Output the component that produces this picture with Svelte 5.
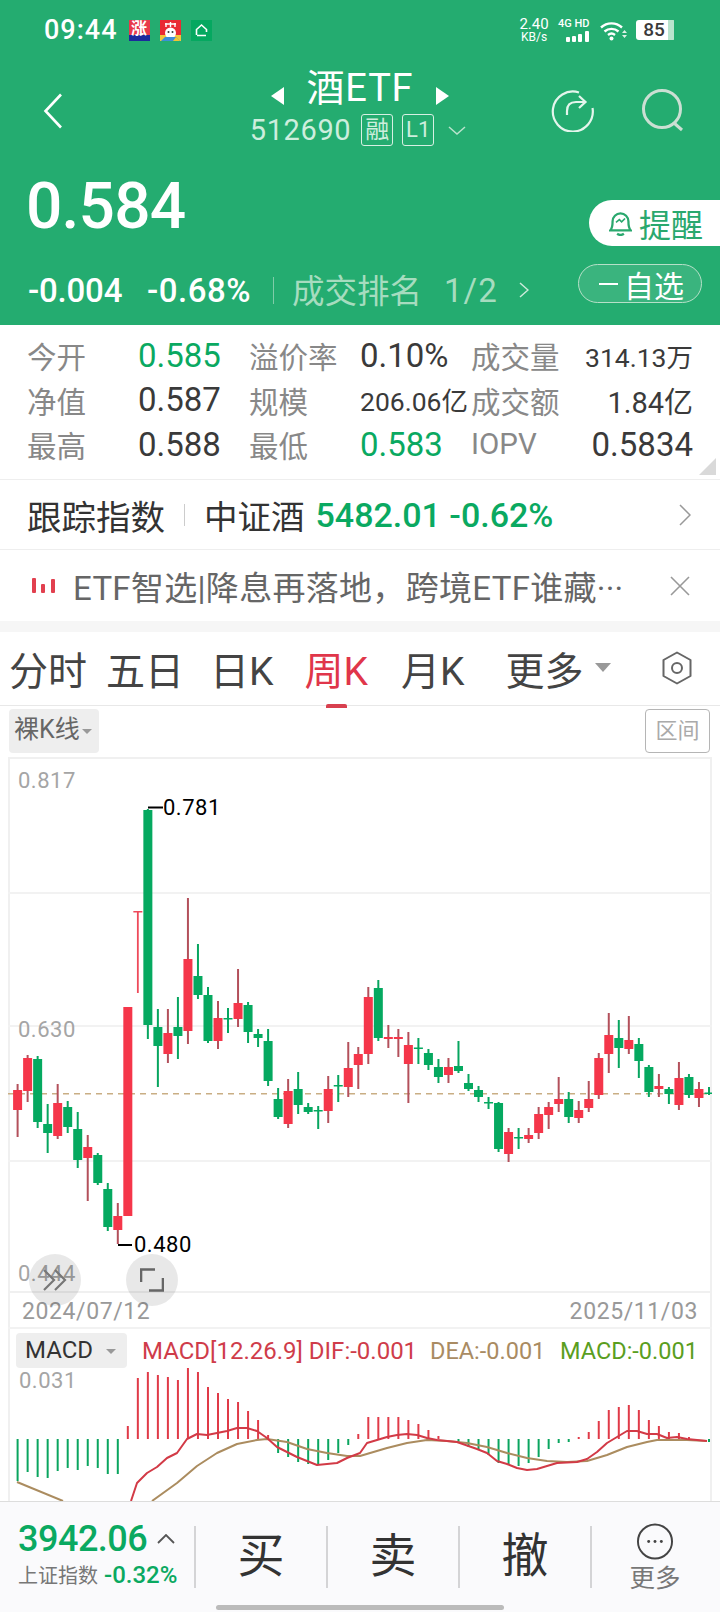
<script lang="ts">
  // one row per weekly candle: [colour, high, bodyTop, bodyBottom, low], y in page px
  const candles: [string, number, number, number, number][] = [
    ['r',1084,1090,1110,1137],['r',1055,1058,1091,1102],['g',1056,1059,1122,1128],['g',1104,1124,1133,1153],
    ['r',1084,1103,1136,1139],['g',1101,1107,1127,1133],['g',1112,1129,1160,1168],['r',1135,1147,1158,1201],
    ['g',1153,1155,1183,1185],['g',1183,1189,1227,1231],['r',1203,1216,1230,1244],['r',1007,1007,1216,1216],
    ['t',912,911,912.5,993],['g',809,810,1025,1039],['g',1009,1027,1046,1087],['r',1009,1033,1054,1063],
    ['g',997,1027,1036,1059],['r',898,959,1031,1044],['g',944,976,995,999],['g',987,995,1041,1043],
    ['r',1001,1018,1041,1049],['g',1008,1018,1019.5,1033],['r',969,1003,1019,1027],['g',1002,1005,1032,1043],
    ['g',1029,1034,1038,1047],['g',1029,1041,1081,1086],['g',1088,1099,1117,1119],['r',1079,1091,1124,1128],
    ['g',1072,1089,1105,1114],['g',1103,1107,1112,1114],['g',1106,1110,1111.5,1129],['r',1076,1089,1111,1123],
    ['g',1075,1085,1086.5,1102],['r',1042,1068,1087,1097],['r',1047,1054,1065,1089],['r',987,997,1054,1064],
    ['g',980,988,1038,1041],['r',1025,1037,1039,1048],['r',1029,1037,1039,1057],['r',1032,1045,1064,1103],
    ['g',1038,1047.5,1049,1064],['g',1049,1053,1065,1070],['g',1059,1067,1077,1083],['r',1058,1067,1075,1083],
    ['g',1041,1066,1071,1073],['g',1074,1083,1089,1091],['g',1086,1090,1097,1102],['g',1097,1102,1103.5,1109],
    ['g',1102,1103,1149,1152],['r',1128,1132,1154,1162],['g',1128,1137,1138.5,1149],['r',1128,1135,1139,1143],
    ['r',1107,1114,1133,1139],['r',1102,1107,1115,1129],['r',1077,1099,1104,1112],['g',1092,1099,1117,1123],
    ['r',1101,1110,1118,1123],['r',1081,1099,1108,1112],['r',1053,1058,1095,1099],['r',1013,1035,1054,1073],
    ['g',1020,1038,1048,1068],['r',1016,1040,1049,1054],['g',1038,1044,1061,1078],['g',1065,1067,1092,1097],
    ['r',1074,1086,1089,1097],['g',1087,1089,1094,1104],['r',1062,1078,1105,1110],['g',1074,1077,1095,1098],
    ['r',1082,1089,1098,1107],['g',1087,1092.5,1094,1095]
  ];

  // macd histogram end points, the other end is the zero line
  const bars = [
    1481,1472,1477,1478,1471,1468,1470,1466,1468,1474,1474,
    1426,1378,1372,1375,1377,1380,1368,1372,1387,1393,1399,1402,1411,1420,1435,
    1453,1457,1462,1464,1464,1460,1453,1445,
    1434,1417,1417,1417,1417,1420,1424,1430,1436,1439,
    1442,1447,1449,1455,1463,1464,1466,1463,1457,1449,1443,1442,
    1437,1432,1421,1410,1407,1405,1410,1420,1426,1432,1433,1437,1439,1442
  ];
  const zero = 1439;

  const dif = '131,1501 137,1483 147,1473 157,1467 167,1458 177,1453 187,1439 197,1434 207,1435 217,1433 227,1431 237,1428 247,1428 257,1431 267,1438 277,1447 287,1452 297,1457 307,1461 317,1465 327,1464 337,1463 347,1458 360,1453 367,1443 377,1440 387,1437 397,1435 407,1434 417,1435 427,1438 437,1440 457,1442 477,1449 487,1453 497,1461 507,1464 517,1468 527,1470 537,1469 547,1466 557,1463 577,1462 587,1459 597,1452 607,1443 617,1437 627,1431 637,1431 647,1434 657,1434 667,1438 677,1437 687,1439 707,1441';
  const deaLeft = '17,1482 63,1501';
  const dea = '152,1501 177,1483 197,1466 217,1453 237,1444 257,1440 267,1439 287,1442 307,1449 327,1453 347,1456 360,1456 387,1448 407,1443 427,1440 447,1441 467,1443 487,1447 507,1453 527,1458 547,1461 567,1462 587,1461 607,1455 627,1447 647,1442 657,1440 687,1440 707,1441';

  const xAt = (i: number) => 17.6 + i * 10.02;
  const stats = [
    { label: '今开', value: '0.585', up: true },
    { label: '溢价率', value: '0.10%' },
    { label: '成交量', value: '314.13万', small: true },
    { label: '净值', value: '0.587' },
    { label: '规模', value: '206.06亿', small: true },
    { label: '成交额', value: '1.84亿', mid: true },
    { label: '最高', value: '0.588' },
    { label: '最低', value: '0.583', up: true },
    { label: 'IOPV', value: '0.5834' }
  ];
  const tabs = ['分时', '五日', '日K', '周K', '月K'];
</script>

<div class="page">
  <header class="top">
    <div class="status">
      <span class="clock">09:44</span>
      <span class="app app-rise"><i>涨</i></span>
      <span class="app app-gift"><svg viewBox="0 0 21 21" width="21" height="21"><circle cx="10.5" cy="13" r="5.5" fill="#fff"/><circle cx="8.5" cy="12" r="1" fill="#333"/><circle cx="12.5" cy="12" r="1" fill="#333"/><path d="M6 7V3M10.5 7V2M15 7V3M5 4h11" stroke="#fff" stroke-width="1.4" fill="none"/><path d="M1 21l4-4h11l4 4z" fill="#3d8fd8"/><path d="M13 21l3-4 4 4z" fill="#f4c52f"/></svg></span>
      <span class="app app-home"><svg viewBox="0 0 21 21" width="21" height="21"><path d="M5.5 15V9.5l5-4.500 5 4.500V12M6 15.500h9" fill="none" stroke="#fff" stroke-width="1.600"/></svg></span>
      <span class="status-right">
        <span class="speed"><b>2.40</b><b class="unit">KB/s</b></span>
        <span class="signal">
          <b>4G HD</b>
          <svg viewBox="0 0 32 11" width="32" height="11"><g fill="#fff"><rect x="8" y="6" width="4" height="5" rx="1"/><rect x="14" y="5" width="4" height="6" rx="1"/><rect x="20" y="3" width="4" height="8" rx="1"/><rect x="27" y="0" width="4" height="11" rx="1"/></g></svg>
        </span>
        <svg class="wifi" viewBox="0 0 27 21" width="27" height="21"><g fill="none" stroke="#fff" stroke-width="2.400"><path d="M1 7.500C7 2 16 2 22 7.500"/><path d="M4.500 11.500c4-3.500 10-3.500 14 0"/><path d="M8 15c2-1.600 5-1.600 7 0"/></g><circle cx="11.500" cy="18.500" r="2" fill="#fff"/><path d="M22 13h5l-2.500-3zM22 15h5l-2.500 3z" fill="#dff2e8"/></svg>
        <span class="battery">85</span>
      </span>
    </div>

    <div class="nav">
      <svg class="back" viewBox="0 0 20 36" width="20" height="36"><path d="M18 1.500 2.500 18 18 34.500" fill="none" stroke="#fff" stroke-width="2.600"/></svg>
      <div class="title-box">
        <div class="title-line">
          <span class="tri tri-left"></span>
          <span class="title">酒ETF</span>
          <span class="tri tri-right"></span>
        </div>
        <div class="code-line">
          <span class="code">512690</span>
          <span class="badge">融</span>
          <span class="badge">L1</span>
          <svg viewBox="0 0 18 9" width="18" height="9"><path d="M1 1l8 7 8-7" fill="none" stroke="#b9e3cc" stroke-width="1.500"/></svg>
        </div>
      </div>
      <div class="nav-icons">
        <svg viewBox="0 0 44 44" width="44" height="44"><g fill="none" stroke="#e4f5ec" stroke-width="2.200"><path d="M28 4.500A20 20 0 1 0 41.500 20"/><path d="M16 27v-4c0-6 3-9 9-9h9"/><path d="M28 8l6.500 6-6.500 6"/></g></svg>
        <svg viewBox="0 0 44 44" width="44" height="44"><circle cx="21" cy="21" r="18.500" fill="none" stroke="#cbdfd3" stroke-width="3"/><path d="M33 35l8 7" stroke="#cbdfd3" stroke-width="3"/></svg>
      </div>
    </div>

    <div class="price-line">
      <div class="price">0.584</div>
      <div class="remind">
        <svg viewBox="2 1 20 23" width="23" height="26"><g fill="none" stroke="#2aa86e" stroke-width="2"><path d="M3 19c2-2 2-4 2-8a7 7 0 0 1 14 0c0 4 0 6 2 8z"/><path d="M9 22c2 1.500 4 1.500 6 0"/><path d="M8 12l3-2.500 2 2 3-3" stroke-width="1.400"/></g></svg>
        <span>提醒</span>
      </div>
    </div>

    <div class="change-line">
      <span class="chg">-0.004</span>
      <span class="chg chg-pct">-0.68%</span>
      <span class="rule"></span>
      <span class="rank">成交排名</span>
      <span class="rank rank-no">1/2</span>
      <svg viewBox="0 0 10 16" width="10" height="16"><path d="M1 1l8 7-8 7" fill="none" stroke="#cdebdb" stroke-width="1.500"/></svg>
      <div class="watch"><i></i><span>自选</span></div>
    </div>
  </header>

  <section class="stats">
    {#each stats as s}
      <span class="stat-label">{s.label}</span>
      <span class="stat-value" class:up={s.up} class:small={s.small} class:mid={s.mid}>{s.value}</span>
    {/each}
    <span class="corner"></span>
  </section>

  <div class="tracker">
    <span class="track-name">跟踪指数</span>
    <span class="rule-grey"></span>
    <span class="track-index">中证酒</span>
    <span class="track-num">5482.01 -0.62%</span>
    <svg viewBox="0 0 12 22" width="12" height="22"><path d="M1 1l10 10L1 21" fill="none" stroke="#999" stroke-width="1.500"/></svg>
  </div>

  <div class="news">
    <svg viewBox="0 0 23 15" width="23" height="15"><g fill="#e2404f"><rect x="0" y="0" width="4" height="15" rx="1"/><rect x="9" y="6" width="4" height="9" rx="1"/><rect x="19" y="1" width="4" height="14" rx="1"/></g></svg>
    <span class="news-text">ETF智选|降息再落地，跨境ETF谁藏···</span>
    <svg viewBox="0 0 20 20" width="20" height="20"><path d="M1 1l18 18M19 1 1 19" stroke="#999" stroke-width="1.600"/></svg>
  </div>

  <div class="gap"></div>

  <nav class="tabs">
    {#each tabs as t, i}
      <span class="tab" class:active={i === 3}>{t}</span>
    {/each}
    <span class="tab tab-more">更多<i class="caret"></i></span>
    <svg class="hex" viewBox="0 0 32 34" width="32" height="34"><path d="M16 1.500 29.500 9v16L16 32.500 2.500 25V9z" fill="none" stroke="#666" stroke-width="2" stroke-linejoin="round"/><circle cx="16" cy="17" r="5" fill="none" stroke="#666" stroke-width="2"/></svg>
  </nav>

  <div class="filters">
    <span class="naked">裸K线<i class="caret caret-s"></i></span>
    <span class="range">区间</span>
  </div>

  <main class="charts">
    <div class="kline">
      <svg viewBox="8 757 704 536" width="704" height="536">
        {#each [893, 1026, 1161] as y}
          <line x1="8" x2="712" y1={y} y2={y} stroke="#f2f2f2" stroke-width="2" />
        {/each}
        <text class="axis" x="18" y="788">0.817</text>
        <text class="axis" x="18" y="1037">0.630</text>
        <text class="axis" x="18" y="1281">0.444</text>
        <line x1="8" x2="712" y1="1093.700" y2="1093.700" stroke="#c9ae84" stroke-width="1.500" stroke-dasharray="6 5" />
        {#each candles as [c, hi, top, bot, lo], i}
          <line class="wick-{c}" x1={xAt(i)} x2={xAt(i)} y1={hi} y2={lo} />
          <rect class="body-{c}" x={xAt(i) - 4.5} y={top} width="9" height={bot - top} />
        {/each}
        <line x1="148" x2="163" y1="807.500" y2="807.500" stroke="#000" stroke-width="2" />
        <text class="mark" x="163" y="815">0.781</text>
        <line x1="118" x2="132" y1="1245" y2="1245" stroke="#000" stroke-width="2" />
        <text class="mark" x="134" y="1252">0.480</text>
      </svg>
      <button class="round round-a" aria-label="展开"><svg viewBox="0 0 24 22" width="24" height="22"><path d="M1 1l10 10L1 21M12 1l10 10-10 10" fill="none" stroke="#777" stroke-width="2.200"/></svg></button>
      <button class="round round-b" aria-label="全屏"><svg viewBox="0 0 24 24" width="24" height="24"><path d="M1 14V1.500h14M23 10v12.500H9" fill="none" stroke="#666" stroke-width="2.600"/></svg></button>
    </div>

    <div class="dates"><span>2024/07/12</span><span>2025/11/03</span></div>

    <div class="macd">
      <svg viewBox="8 1329 704 172" width="704" height="172">
        {#each bars as end, i}
          {#if i !== 43}
            <line class={i < 11 || (i >= 26 && i < 34) || (i >= 44 && i < 56) || i === 69 ? 'bar-g' : 'bar-r'} x1={xAt(i)} x2={xAt(i)} y1={zero} y2={end} />
          {/if}
        {/each}
        <polyline class="dea" points={deaLeft} />
        <polyline class="dea" points={dea} />
        <polyline class="dif" points={dif} />
      </svg>
      <div class="macd-head">
        <span class="macd-tag">MACD<i class="caret caret-s"></i></span>
        <span class="m-dif">MACD[12.26.9] DIF:-0.001</span>
        <span class="m-dea">DEA:-0.001</span>
        <span class="m-val">MACD:-0.001</span>
      </div>
      <div class="macd-max">0.031</div>
    </div>
  </main>

  <footer class="bottom">
    <div class="index">
      <div class="index-top"><span class="index-num">3942.06</span><svg viewBox="0 0 18 10" width="18" height="10"><path d="M1 9l8-8 8 8" fill="none" stroke="#555" stroke-width="1.800"/></svg></div>
      <div class="index-sub"><span>上证指数</span><b>-0.32%</b></div>
    </div>
    <span class="action">买</span>
    <span class="action">卖</span>
    <span class="action">撤</span>
    <div class="more">
      <svg viewBox="0 0 38 38" width="38" height="38"><circle cx="19" cy="19" r="17.500" fill="none" stroke="#444" stroke-width="2"/><g fill="#444"><circle cx="12.500" cy="19" r="1.500"/><circle cx="19" cy="19" r="1.500"/><circle cx="25.500" cy="19" r="1.500"/></g></svg>
      <span>更多</span>
    </div>
    <span class="home-bar"></span>
  </footer>
</div>

<style>
  :global(body) {
    margin: 0;
    background: #fff;
  }
  .page {
    position: relative;
    width: 720px;
    height: 1612px;
    overflow: hidden;
    display: flex;
    flex-direction: column;
    font-family: Roboto, "Noto Sans CJK SC", sans-serif;
    color: #333;
  }
  i {
    font-style: normal;
  }

  /* green header */
  .top {
    height: 325px;
    flex: none;
    background: #24ac70;
    color: #fff;
    box-sizing: border-box;
  }
  .status {
    height: 60px;
    display: flex;
    align-items: center;
    padding: 0 44px;
  }
  .clock {
    width: 84.5px;
    font-size: 27px;
    font-weight: 500;
    letter-spacing: 1px;
  }
  .app {
    width: 21px;
    height: 21px;
    margin-right: 10px;
    overflow: hidden;
    display: block;
    flex: none;
  }
  .app-rise {
    background: linear-gradient(#e8394a 70%, #1c2a9c 70%);
    text-align: center;
    line-height: 17px;
    font-size: 16px;
    color: #fff;
    font-weight: 700;
  }
  .app-gift {
    background: linear-gradient(#e92a33 70%, #f2c63a 70%);
  }
  .app-home {
    background: #05a860;
  }
  .status-right {
    margin-left: auto;
    display: flex;
    align-items: center;
  }
  .speed {
    width: 32px;
    display: flex;
    flex-direction: column;
    text-align: center;
    margin-right: 8px;
  }
  .speed b {
    font-size: 15px;
    line-height: 13px;
    font-weight: 400;
    white-space: nowrap;
  }
  .speed .unit {
    font-size: 12px;
    line-height: 10px;
    margin-top: 1px;
  }
  .signal {
    width: 32px;
    display: flex;
    flex-direction: column;
    gap: 2px;
    margin-right: 10px;
  }
  .signal b {
    font-size: 11px;
    line-height: 10px;
    font-weight: 500;
    white-space: nowrap;
  }
  .signal svg {
    display: block;
  }
  .wifi {
    margin-right: 9px;
  }
  .battery {
    width: 36px;
    height: 20px;
    padding-right: 4px;
    background: linear-gradient(90deg, #fff 80%, #b9e4cd 80%, #b9e4cd 96%, transparent 96%);
    border-radius: 3px;
    color: #3a3a3a;
    font-size: 19px;
    font-weight: 500;
    line-height: 20px;
    text-align: center;
  }

  .nav {
    height: 93px;
    display: flex;
    align-items: flex-start;
    position: relative;
  }
  .back {
    margin: 33px 0 0 43px;
    flex: none;
  }
  .title-box {
    position: absolute;
    left: 0;
    right: 0;
    top: 6px;
    display: flex;
    flex-direction: column;
    align-items: center;
    pointer-events: none;
  }
  .title-line {
    height: 44px;
    display: flex;
    align-items: center;
    gap: 23px;
  }
  .title {
    font-size: 38px;
    line-height: 44px;
    letter-spacing: 0.8px;
  }
  .tri {
    width: 0;
    height: 0;
    border-top: 9.5px solid transparent;
    border-bottom: 9.5px solid transparent;
    margin-top: 16px;
  }
  .tri-left {
    border-right: 13px solid #fff;
  }
  .tri-right {
    border-left: 13px solid #fff;
  }
  .code-line {
    display: flex;
    align-items: center;
    height: 34px;
    margin: 3px 4px 0 0;
    color: #cdeedd;
  }
  .code {
    font-size: 29px;
    letter-spacing: 0.6px;
    margin-right: 10px;
  }
  .badge {
    width: 32px;
    height: 32px;
    box-sizing: border-box;
    border: 1px solid #d7f0e3;
    border-radius: 3px;
    font-size: 24px;
    line-height: 30px;
    text-align: center;
    margin-right: 9px;
  }
  .badge + .badge {
    margin-right: 14px;
    font-size: 22px;
  }
  .nav-icons {
    margin-left: auto;
    margin-top: 28px;
    padding-right: 35px;
    display: flex;
    gap: 46px;
  }

  .price-line {
    height: 110px;
    margin-top: 12px;
    position: relative;
    padding-left: 26px;
  }
  .price {
    font-size: 64px;
    font-weight: 500;
    line-height: 76px;
    margin-top: 16px;
    letter-spacing: -0.8px;
  }
  .remind {
    position: absolute;
    right: 0;
    top: 31px;
    width: 131px;
    height: 46px;
    box-sizing: border-box;
    padding-left: 20px;
    background: #fff;
    border-radius: 23px 0 0 23px;
    display: flex;
    align-items: center;
    gap: 7px;
    color: #2aa86e;
    font-size: 32px;
  }
  .change-line {
    display: flex;
    align-items: center;
    height: 42px;
    margin-top: -10px;
    padding-left: 28px;
    position: relative;
  }
  .chg {
    font-size: 33px;
    font-weight: 500;
    letter-spacing: -0.2px;
    width: 119px;
  }
  .chg-pct {
    width: 126px;
    letter-spacing: 0.5px;
  }
  .rule {
    width: 1px;
    height: 27px;
    background: #7fcca8;
    margin-right: 18px;
  }
  .rank {
    font-size: 32.5px;
    color: #a6dcbf;
    margin: 0 22px 3px 0;
  }
  .rank-no {
    font-size: 33px;
    letter-spacing: 1px;
    margin: 0 21px 0 0;
  }
  .watch {
    position: absolute;
    left: 578px;
    top: -5px;
    width: 124px;
    height: 39px;
    box-sizing: border-box;
    border: 1px solid #b6e0c8;
    border-radius: 20px;
    background: rgba(255, 255, 255, 0.1);
    display: flex;
    align-items: center;
    padding-left: 20px;
    font-size: 30px;
  }
  .watch i {
    width: 19px;
    height: 2px;
    background: #fff;
    margin-right: 6px;
  }

  /* quote grid */
  .stats {
    position: relative;
    height: 155px;
    flex: none;
    box-sizing: border-box;
    padding: 8px 27px 0 27px;
    display: grid;
    grid-template-columns: 111px 111px 111px 111px 112px 1fr;
    grid-auto-rows: 44.5px;
    align-items: center;
    border-bottom: 1px solid #eee;
  }
  .stat-label {
    font-size: 29.5px;
    color: #888;
  }
  .stat-value {
    font-size: 33px;
    color: #3a3a3a;
    white-space: nowrap;
  }
  .stat-value:nth-child(6n) {
    text-align: right;
    justify-self: end;
  }
  .stat-value.small {
    font-size: 26.5px;
  }
  .stat-value.mid {
    font-size: 29px;
  }
  .stat-value.up {
    color: #0aa961;
  }
  .corner {
    position: absolute;
    right: 4px;
    bottom: 4px;
    width: 0;
    height: 0;
    border-left: 17px solid transparent;
    border-bottom: 17px solid #d9d9d9;
  }

  .tracker {
    height: 70px;
    flex: none;
    box-sizing: border-box;
    border-bottom: 1px solid #eee;
    display: flex;
    align-items: center;
    padding: 0 29px 0 27px;
  }
  .track-name {
    font-size: 34.5px;
    color: #333;
  }
  .rule-grey {
    width: 1px;
    height: 22px;
    background: #ccc;
    margin: 0 19px;
  }
  .track-index {
    font-size: 33.5px;
    color: #333;
    margin-right: 11px;
  }
  .track-num {
    font-size: 34px;
    font-weight: 500;
    color: #0aa961;
    flex: 1;
  }

  .news {
    height: 71px;
    flex: none;
    display: flex;
    align-items: center;
    padding: 0 30px 0 32px;
  }
  .news-text {
    flex: 1;
    margin-left: 18px;
    font-size: 33px;
    letter-spacing: 0.3px;
    color: #666;
    white-space: nowrap;
  }
  .gap {
    height: 11px;
    flex: none;
    background: #f6f6f6;
  }

  /* period tabs */
  .tabs {
    position: relative;
    height: 74px;
    flex: none;
    box-sizing: border-box;
    border-bottom: 1px solid #e8e8e8;
    display: flex;
    align-items: center;
    padding: 0 27px 2px 9px;
  }
  .tab {
    font-size: 39px;
    color: #444;
    white-space: nowrap;
  }
  .tab:nth-child(1) {
    margin-right: 19px;
  }
  .tab:nth-child(2) {
    margin-right: 26px;
  }
  .tab:nth-child(3) {
    margin-right: 31px;
  }
  .tab:nth-child(4) {
    margin-right: 33px;
  }
  .tab:nth-child(5) {
    margin-right: 41px;
  }
  .tab.active {
    color: #e0364a;
    position: relative;
  }
  .tab.active::after {
    content: "";
    position: absolute;
    left: 21px;
    right: 21px;
    bottom: -12px;
    height: 4px;
    border-radius: 2px 2px 0 0;
    background: #d8404f;
  }
  .tab-more {
    display: flex;
    align-items: center;
  }
  .caret {
    display: inline-block;
    width: 0;
    height: 0;
    margin-left: 11px;
    border-left: 8px solid transparent;
    border-right: 8px solid transparent;
    border-top: 9px solid #999;
  }
  .caret-s {
    margin-left: 2px;
    border-left-width: 5px;
    border-right-width: 5px;
    border-top-width: 5px;
    vertical-align: middle;
  }
  .hex {
    margin-left: auto;
  }

  .filters {
    height: 51px;
    flex: none;
    box-sizing: border-box;
    padding: 3px 10px 4px 9px;
    display: flex;
    justify-content: space-between;
  }
  .naked {
    width: 90px;
    box-sizing: border-box;
    padding-left: 5px;
    background: #eee;
    border-radius: 4px;
    font-size: 25px;
    line-height: 42px;
    color: #666;
    white-space: nowrap;
  }
  .range {
    width: 65px;
    box-sizing: border-box;
    border: 1px solid #b5b5b5;
    border-radius: 4px;
    font-size: 22px;
    line-height: 42px;
    text-align: center;
    color: #aaa;
  }

  /* charts */
  .charts {
    margin: 0 8px;
    width: 704px;
    height: 744px;
    flex: none;
    box-shadow: inset 2px 0 0 #f0f0f0, inset -2px 0 0 #f0f0f0;
  }
  .kline {
    position: relative;
    height: 536px;
    box-shadow: inset 0 2px 0 #f0f0f0, inset 0 -2px 0 #f0f0f0;
  }
  .kline svg,
  .macd > svg {
    display: block;
  }
  .axis {
    font-size: 22px;
    letter-spacing: 0.5px;
    fill: #a5a5a5;
  }
  .mark {
    font-size: 22px;
    letter-spacing: 0.5px;
    fill: #000;
  }
  .wick-r {
    stroke: #b3505b;
    stroke-width: 2;
  }
  .wick-t {
    stroke: #ee4a5a;
    stroke-width: 1.8;
  }
  .wick-g {
    stroke: #07a55f;
    stroke-width: 2;
  }
  .body-r {
    fill: #f5364a;
  }
  .body-t {
    fill: #ee4a5a;
  }
  .body-g {
    fill: #05a960;
  }
  .round {
    position: absolute;
    top: 497px;
    width: 52px;
    height: 52px;
    padding: 0;
    border: 0;
    border-radius: 50%;
    background: rgba(0, 0, 0, 0.09);
    display: flex;
    align-items: center;
    justify-content: center;
  }
  .round-a {
    left: 21px;
  }
  .round-b {
    left: 118px;
  }
  .dates {
    height: 36px;
    display: flex;
    justify-content: space-between;
    align-items: center;
    padding: 0 14px;
    font-size: 23px;
    letter-spacing: 0.6px;
    color: #999;
    box-shadow: inset 0 -2px 0 #f2f2f2;
  }
  .macd {
    position: relative;
    height: 172px;
  }
  .macd-head {
    position: absolute;
    left: 8px;
    top: 4px;
    height: 35px;
    display: flex;
    align-items: center;
    font-size: 24px;
    white-space: nowrap;
  }
  .macd-tag {
    width: 111px;
    height: 35px;
    box-sizing: border-box;
    padding-left: 9px;
    margin-right: 15px;
    background: #eee;
    border-radius: 4px;
    font-size: 24px;
    line-height: 35px;
    color: #333;
  }
  .macd-tag .caret {
    margin-left: 13px;
  }
  .m-dif {
    color: #cf3c4a;
    width: 288px;
  }
  .m-dea {
    color: #a98b62;
    width: 130px;
    font-size: 23.5px;
  }
  .m-val {
    color: #5a9e1e;
    font-size: 23.5px;
  }
  .macd-max {
    position: absolute;
    left: 11px;
    top: 39px;
    font-size: 22px;
    letter-spacing: 0.5px;
    color: #a5a5a5;
  }
  .bar-g,
  .bar-r {
    stroke-width: 2;
  }
  .bar-g {
    stroke: #0aa55f;
  }
  .bar-r {
    stroke: #e03a48;
  }
  .dif,
  .dea {
    fill: none;
    stroke-width: 2;
    stroke-linejoin: round;
  }
  .dif {
    stroke: #d23a46;
  }
  .dea {
    stroke: #ab8c5f;
  }

  /* bottom action bar */
  .bottom {
    position: relative;
    flex: 1;
    box-sizing: border-box;
    border-top: 1px solid #ddd;
    background: #fafafc;
    display: grid;
    grid-template-columns: 194px 132px 132px 132px 1fr;
    padding-top: 24px;
    grid-template-rows: 62px;
  }
  .index {
    padding-left: 18px;
    margin-top: -6px;
  }
  .index-top {
    display: flex;
    align-items: center;
    gap: 10px;
    height: 38px;
  }
  .index-num {
    font-size: 36px;
    font-weight: 500;
    color: #0aa961;
    letter-spacing: -0.5px;
  }
  .index-sub {
    display: flex;
    align-items: center;
    gap: 6px;
    margin-top: 2px;
    font-size: 20px;
    color: #777;
    white-space: nowrap;
  }
  .index-sub b {
    font-size: 24px;
    font-weight: 500;
    color: #0aa961;
  }
  .action {
    border-left: 2px solid #d4d4d6;
    text-align: center;
    font-size: 47px;
    line-height: 60px;
    color: #333;
  }
  .more {
    position: relative;
    display: flex;
    flex-direction: column;
    align-items: center;
    height: 70px;
    margin-top: -3px;
    font-size: 25.5px;
    line-height: 30px;
    color: #777;
  }
  .more::before {
    content: "";
    position: absolute;
    left: 0;
    top: 3px;
    width: 2px;
    height: 62px;
    background: #d4d4d6;
  }
  .more span {
    margin-top: 3px;
  }
  .home-bar {
    position: absolute;
    left: 216px;
    bottom: 2px;
    width: 288px;
    height: 5px;
    border-radius: 3px;
    background: #bbb;
  }
</style>
